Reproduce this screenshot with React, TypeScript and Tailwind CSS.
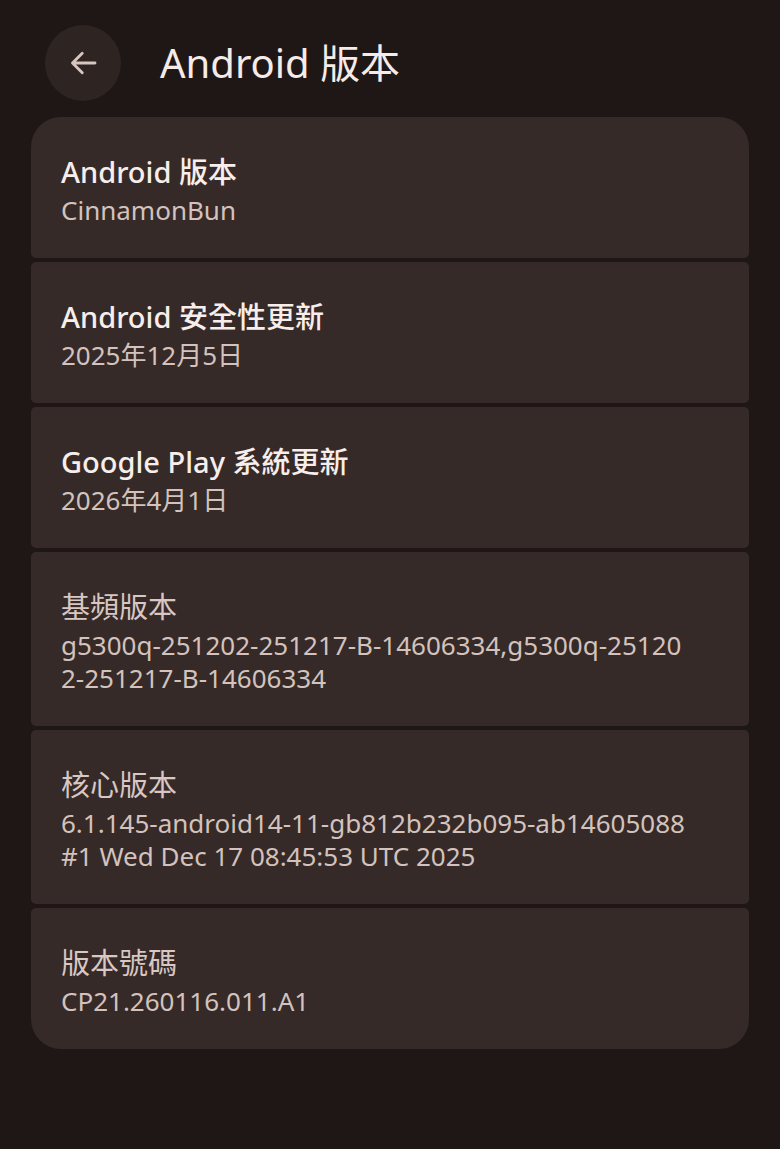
import React from 'react';

type Item = {
  title: string;
  lines: string[];
  dim?: boolean;
};

const items: Item[] = [
  { title: 'Android 版本', lines: ['CinnamonBun'] },
  { title: 'Android 安全性更新', lines: ['2025年12月5日'] },
  { title: 'Google Play 系統更新', lines: ['2026年4月1日'] },
  {
    title: '基頻版本',
    lines: ['g5300q-251202-251217-B-14606334,g5300q-25120', '2-251217-B-14606334'],
    dim: true,
  },
  {
    title: '核心版本',
    lines: ['6.1.145-android14-11-gb812b232b095-ab14605088', '#1 Wed Dec 17 08:45:53 UTC 2025'],
    dim: true,
  },
  { title: '版本號碼', lines: ['CP21.260116.011.A1'], dim: true },
];

const font = { fontFamily: '"Noto Sans", "Noto Sans CJK TC", sans-serif' };

export default function App() {
  return (
    <div className="min-h-screen bg-[#1f1715] text-white" style={font}>
      {/* header */}
      <div className="flex items-center pt-[25px] pl-[45px]">
        <button className="w-[76px] h-[76px] rounded-full bg-[#2e2523] flex items-center justify-center">
          <svg width="36" height="36" viewBox="0 0 24 24" fill="none">
            <path
              d="M20 12H5M11.5 5.5L5 12l6.5 6.5"
              stroke="#d8c5bf"
              strokeWidth="1.9"
              strokeLinecap="round"
              strokeLinejoin="round"
            />
          </svg>
        </button>
        <h1 className="ml-[39px] text-[40px] leading-[46px] text-[#f5ebe8]">Android 版本</h1>
      </div>

      {/* list */}
      <div className="mx-[31px] mt-[16px] flex flex-col gap-[4px]">
        {items.map((it, i) => {
          const first = i === 0;
          const last = i === items.length - 1;
          return (
            <div
              key={it.title}
              className={
                'bg-[#352a28] pl-[30px] pr-[20px] pt-[37px] pb-[31px] ' +
                (first ? 'rounded-t-[30px] rounded-b-[5px]' : last ? 'rounded-b-[30px] rounded-t-[5px]' : 'rounded-[5px]')
              }
            >
              <div
                className={
                  'text-[29px] leading-[36px] ' + (it.dim ? 'text-[#d8c7c2]' : 'text-[#f7eeeb] font-medium')
                }
              >
                {it.title}
              </div>
              <div className="mt-[4px] text-[26px] leading-[33px] text-[#d3c2bd] whitespace-nowrap">
                {it.lines.map(l => (
                  <div key={l}>{l}</div>
                ))}
              </div>
            </div>
          );
        })}
      </div>
    </div>
  );
}
